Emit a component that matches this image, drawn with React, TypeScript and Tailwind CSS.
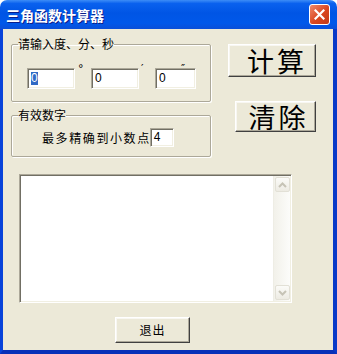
const cjk = "font-['SimSun','Noto_Sans_CJK_SC',sans-serif]";
const sym = "text-[11px] leading-none text-black font-['DejaVu_Sans',sans-serif]";

function Sunken({ className, children }: { className: string; children?: React.ReactNode }) {
  return (
    <div
      className={`border border-t-[#ACA899] border-l-[#ACA899] border-b-white border-r-white bg-white shadow-[inset_1px_1px_0_#716F64,inset_-1px_-1px_0_#F1EFE2] ${className}`}
    >
      {children}
    </div>
  );
}

function XpButton({ className, children }: { className: string; children: React.ReactNode }) {
  return (
    <button
      className={`flex items-center justify-center border border-t-white border-l-white border-b-[#404040] border-r-[#404040] bg-[#ECE9D8] shadow-[inset_-1px_-1px_0_#ACA899,inset_1px_1px_0_#F8F7F2] text-black ${cjk} ${className}`}
    >
      {children}
    </button>
  );
}

function Arrow({ up }: { up?: boolean }) {
  return (
    <div className="w-[15px] h-[15px] m-px rounded-[2px] border border-[#E2E0D6] bg-[linear-gradient(to_bottom,#FBFBF8,#EDEBE3)] flex items-center justify-center">
      <svg width="9" height="6" viewBox="0 0 9 6">
        <path
          d={up ? "M1 5 L4.5 1.5 L8 5" : "M1 1 L4.5 4.5 L8 1"}
          stroke="#C6C3B6"
          strokeWidth="2"
          fill="none"
        />
      </svg>
    </div>
  );
}

export default function App() {
  return (
    <div className="w-[337px] h-[354px] flex flex-col bg-white">
      {/* Title bar */}
      <div className="h-[29px] rounded-t-[7px] bg-[linear-gradient(to_bottom,#3D8DF7_0%,#0A61EE_12%,#0055E5_45%,#0058EA_80%,#0A4FD8_100%)] flex items-center pl-[6px] pr-[6px]">
        <span className={`text-white text-[14px] font-bold leading-none [text-shadow:1px_1px_0_#0A1E8C] ${cjk}`}>
          三角函数计算器
        </span>
        <div className="ml-auto mr-px w-[21px] h-[21px] rounded-[3px] border border-white bg-[linear-gradient(135deg,#F08A6C,#D9461F_55%,#C33A16)] flex items-center justify-center">
          <svg width="11" height="11" viewBox="0 0 11 11">
            <path d="M1.5 1.5 L9.5 9.5 M9.5 1.5 L1.5 9.5" stroke="white" strokeWidth="2.2" strokeLinecap="square" />
          </svg>
        </div>
      </div>

      {/* Client area */}
      <div className="flex-1 flex flex-col bg-[#ECE9D8] border-l-[3px] border-r-[4px] border-b-[4px] border-l-[#0843DA] border-r-[#0839C8] border-b-[#0730B8]">
        <div className="flex pl-[8px] pt-[8px]">
          <div className="w-[200px] flex flex-col">
            <fieldset className="h-[65px] border border-[#ACA899] rounded-[2px] px-[6px] shadow-[inset_1px_1px_0_white,1px_1px_0_white]">
              <legend className={`text-[12px] leading-[14px] text-black ${cjk}`}>请输入度、分、秒</legend>
              <div className="flex items-start ml-[9px] mt-[17px]">
                <Sunken className="w-[48px] h-[21px] flex items-center pl-[3px]">
                  <span className="bg-[#316AC5] text-white text-[12px] leading-[13px] font-['Liberation_Sans',sans-serif]">0</span>
                </Sunken>
                <span className={`w-[16px] -mt-[5px] pl-[3px] ${sym}`}>°</span>
                <Sunken className="w-[48px] h-[21px] flex items-center pl-[3px]">
                  <span className="text-[12px] leading-[13px] font-['Liberation_Sans',sans-serif]">0</span>
                </Sunken>
                <span className={`w-[16px] -mt-[5px] pl-[2px] ${sym}`}>′</span>
                <div className="relative">
                  <Sunken className="w-[41px] h-[21px] flex items-center pl-[3px]">
                    <span className="text-[12px] leading-[13px] font-['Liberation_Sans',sans-serif]">0</span>
                  </Sunken>
                  <span className={`absolute left-[26px] -top-[5px] ${sym}`}>″</span>
                </div>
              </div>
            </fieldset>
            <fieldset className="mt-[6px] h-[49px] border border-[#ACA899] rounded-[2px] px-[6px] shadow-[inset_1px_1px_0_white,1px_1px_0_white]">
              <legend className={`text-[12px] leading-[14px] text-black ${cjk}`}>有效数字</legend>
              <div className="flex items-center ml-[24px] mt-[6px]">
                <span className={`text-[12px] leading-[14px] tracking-[1.6px] ${cjk}`}>最多精确到小数点</span>
                <Sunken className="w-[24px] h-[19px] flex items-center pl-[3px] -ml-[1px]">
                  <span className="text-[12px] leading-[13px] font-['Liberation_Sans',sans-serif]">4</span>
                </Sunken>
              </div>
            </fieldset>
          </div>

          <div className="flex flex-col items-end w-[105px] mt-[7px]">
            <XpButton className="w-[88px] h-[33px] text-[27px] leading-none pl-[10px] tracking-[3px]">计算</XpButton>
            <XpButton className="w-[81px] h-[31px] mt-[24px] text-[27px] leading-none pl-[6px] tracking-[3px]">清除</XpButton>
          </div>
        </div>

        {/* Output box */}
        <div className="ml-[16px] mt-[17px] w-[273px] h-[129px] flex border border-t-[#ACA899] border-l-[#ACA899] border-b-white border-r-white shadow-[inset_1px_1px_0_#716F64,inset_-1px_-1px_0_#F1EFE2] p-px">
          <div className="flex-1 bg-white" />
          <div className="w-[17px] flex flex-col bg-[linear-gradient(to_right,#F2F1EA,#FCFCFA)] border-l border-[#EEEDE5]">
            <Arrow up />
            <div className="flex-1" />
            <Arrow />
          </div>
        </div>

        <XpButton className="ml-[112px] mt-[14px] w-[75px] h-[26px] text-[12px] leading-none tracking-[1px]">退出</XpButton>
      </div>
    </div>
  );
}
